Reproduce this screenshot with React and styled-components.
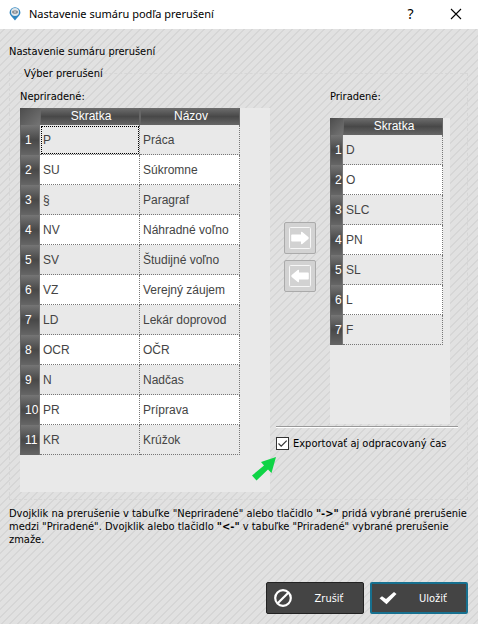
import React, { useState } from "react"
import styled, { createGlobalStyle, css } from "styled-components"

const unassigned = [
    ["P", "Práca"],
    ["SU", "Súkromne"],
    ["§", "Paragraf"],
    ["NV", "Náhradné voľno"],
    ["SV", "Študijné voľno"],
    ["VZ", "Verejný záujem"],
    ["LD", "Lekár doprovod"],
    ["OCR", "OČR"],
    ["N", "Nadčas"],
    ["PR", "Príprava"],
    ["KR", "Krúžok"],
]

const assigned = [["D"], ["O"], ["SLC"], ["PN"], ["SL"], ["L"], ["F"]]

const PinIcon = () => (
    <svg width="12" height="14" viewBox="0 0 12 14" aria-hidden="true">
        <path
            d="M6 13.6C4.6 11 .6 8.600 .6 5.400A5.400 5.200 0 0 1 11.400 5.400C11.400 8.600 7.400 11 6 13.600Z"
            fill="#2f86c0"
        />
        <circle cx="6" cy="5" r="4" fill="#dfe6ea" />
        <ellipse cx="6" cy="5" rx="3" ry="1.8" fill="#8a8f94" />
        <circle cx="6" cy="5" r="0.8" fill="#e8ecef" />
    </svg>
)

const CloseIcon = () => (
    <svg width="12" height="12" viewBox="0 0 12 12" aria-hidden="true">
        <path d="M1 1L11 11M11 1L1 11" stroke="#000" strokeWidth="1.1" />
    </svg>
)

const MoveIcon = ({ back }) => (
    <svg width="24" height="24" viewBox="0 0 24 24" aria-hidden="true">
        <rect
            x="1.500"
            y="1.500"
            width="21"
            height="21"
            rx="1"
            fill="#d2d2d2"
            stroke="#f6f6f6"
        />
        <path
            d="M4 8.500h9V6.500q0-1.300 1.300-.5l6 5q1 1 0 2l-6 5q-1.300.8-1.300-.5v-2H4q-.8 0-.8-.8v-5.400q0-.8.8-.8z"
            fill="#fff"
            transform={back ? "rotate(180 12 12)" : undefined}
        />
    </svg>
)

const CancelIcon = () => (
    <svg width="18" height="18" viewBox="0 0 18 18" aria-hidden="true">
        <circle cx="9" cy="9" r="7.800" fill="none" stroke="#fff" strokeWidth="2.200" />
        <path d="M14.300 3.700L3.700 14.300" stroke="#fff" strokeWidth="2.200" />
    </svg>
)

const SaveIcon = () => (
    <svg width="18" height="18" viewBox="0 0 18 18" aria-hidden="true">
        <path d="M.5 9.200L3 7.200l4 2.800L15 3l2.500 2L7.500 15.200z" fill="#fff" />
    </svg>
)

const PointerArrow = () => (
    <svg width="26" height="26" viewBox="0 0 26 26" aria-hidden="true">
        <path
            d="M25 1L20.500 17 17 13.500 5.500 24.500 1 19.500 13 9.500 10 6z"
            fill="#0fd446"
        />
    </svg>
)

const DataTable = ({ label, columns, rows, numberWidth, current }) => (
    <Table aria-label={label}>
        <colgroup>
            <Col $width={numberWidth} />
            {columns.map(c => (
                <Col key={c} $width={100} />
            ))}
        </colgroup>
        <thead>
            <tr>
                <Corner />
                {columns.map(c => (
                    <ColumnHead key={c} scope="col">
                        {c}
                    </ColumnHead>
                ))}
            </tr>
        </thead>
        <tbody>
            {rows.map((row, i) => (
                <Row key={row[0]}>
                    <RowHead scope="row">{i + 1}</RowHead>
                    {row.map((value, j) => (
                        <Cell key={j} $current={current && i === 0 && j === 0}>
                            {value}
                        </Cell>
                    ))}
                </Row>
            ))}
        </tbody>
    </Table>
)

export default function App() {
    const [exportWorked, setExportWorked] = useState(true)

    return (
        <>
            <GlobalStyle />
            <Dialog>
                <TitleBar>
                    <PinIcon />
                    <Title>Nastavenie sumáru podľa prerušení</Title>
                    <TitleButton aria-label="Pomocník">?</TitleButton>
                    <TitleButton aria-label="Zavrieť">
                        <CloseIcon />
                    </TitleButton>
                </TitleBar>
                <Content>
                    <Heading>Nastavenie sumáru prerušení</Heading>
                    <Group>
                        <Legend>Výber prerušení</Legend>
                        <Columns>
                            <LeftSide>
                                <Label>Nepriradené:</Label>
                                <TablePanel $height={384}>
                                    <DataTable
                                        label="Nepriradené"
                                        columns={["Skratka", "Názov"]}
                                        rows={unassigned}
                                        numberWidth={20}
                                        current
                                    />
                                </TablePanel>
                            </LeftSide>
                            <RightSide>
                                <Transfer>
                                    <MoveButtons>
                                        <MoveButton aria-label="Priradiť">
                                            <MoveIcon />
                                        </MoveButton>
                                        <MoveButton aria-label="Odobrať">
                                            <MoveIcon back />
                                        </MoveButton>
                                    </MoveButtons>
                                    <Assigned>
                                        <Label>Priradené:</Label>
                                        <TablePanel $height={306}>
                                            <DataTable
                                                label="Priradené"
                                                columns={["Skratka"]}
                                                rows={assigned}
                                                numberWidth={13}
                                            />
                                        </TablePanel>
                                    </Assigned>
                                </Transfer>
                                <Divider />
                                <CheckLabel>
                                    <Checkbox
                                        type="checkbox"
                                        checked={exportWorked}
                                        onChange={e => setExportWorked(e.target.checked)}
                                    />
                                    Exportovať aj odpracovaný čas
                                    <Pointer>
                                        <PointerArrow />
                                    </Pointer>
                                </CheckLabel>
                            </RightSide>
                        </Columns>
                    </Group>
                    <Hint>
                        Dvojklik na prerušenie v tabuľke "Nepriradené" alebo tlačidlo{" "}
                        <b>"-&gt;"</b> pridá vybrané prerušenie medzi "Priradené".
                        Dvojklik alebo tlačidlo <b>"&lt;-"</b> v tabuľke "Priradené"
                        vybrané prerušenie zmaže.
                    </Hint>
                    <Actions>
                        <ActionButton>
                            <CancelIcon />
                            <span>Zrušiť</span>
                        </ActionButton>
                        <ActionButton $primary>
                            <SaveIcon />
                            <span>Uložiť</span>
                        </ActionButton>
                    </Actions>
                </Content>
            </Dialog>
        </>
    )
}

const GlobalStyle = createGlobalStyle`
    *, *::before, *::after {
        box-sizing: border-box;
    }

    body {
        margin: 0;
        background: #dfdfdf;
    }

    button, input {
        font: inherit;
        margin: 0;
    }
`

const Dialog = styled.div`
    display: flex;
    flex-direction: column;
    min-height: 100vh;
    color: #000;
    font-family: "DejaVu Sans Condensed", "Noto Sans", sans-serif;
    font-size: 11px;
    line-height: 13px;
    background: linear-gradient(
        135deg,
        #d6d6d6 12.5%,
        #e1e1e1 12.5%,
        #e1e1e1 50%,
        #d6d6d6 50%,
        #d6d6d6 62.5%,
        #e1e1e1 62.5%
    );
    background-size: 8px 8px;
`

const TitleBar = styled.header`
    display: flex;
    align-items: center;
    height: 29px;
    padding: 0 0 2px 9px;
    background: #fff;
`

const Title = styled.h1`
    flex: 1;
    margin: 0 0 0 8px;
    font: 11px/16px "Noto Sans", sans-serif;
`

const TitleButton = styled.button`
    display: flex;
    align-items: center;
    justify-content: center;
    width: 45px;
    height: 27px;
    padding: 0;
    border: 0;
    background: none;
    font: 14px/16px "Noto Sans", sans-serif;
`

const Content = styled.main`
    flex: 1;
    display: flex;
    flex-direction: column;
    padding: 16px 10px 10px 9px;
`

const Heading = styled.h2`
    margin: 0;
    font-size: 11px;
    font-weight: normal;
`

const Group = styled.fieldset`
    min-width: 0;
    margin: 9px 0 0;
    padding: 10px 9px 7px 10px;
    border: 1px dashed #d6d6d6;
`

const Legend = styled.legend`
    margin-left: 4px;
    padding: 0;
`

const Columns = styled.div`
    display: flex;
    gap: 6px;
`

const LeftSide = styled.div`
    flex: 1;
`

const RightSide = styled.div`
    display: flex;
    flex-direction: column;
    width: 182px;
`

const Label = styled.div`
    height: 18px;
`

const TablePanel = styled.div`
    min-height: ${p => p.$height}px;
    background: #e9e9e9;
`

const Transfer = styled.div`
    display: flex;
    gap: 14px;
    padding: 0 8px;
`

const MoveButtons = styled.div`
    display: flex;
    flex-direction: column;
    justify-content: center;
    gap: 6px;
`

const MoveButton = styled.button`
    display: flex;
    align-items: center;
    justify-content: center;
    width: 32px;
    height: 32px;
    padding: 0;
    border: 1px solid #aaa;
    border-radius: 2px;
    background: #d2d2d2;
`

const Assigned = styled.div`
    flex: 1;

    ${Label} {
        height: 28px;
    }
`

const Table = styled.table`
    table-layout: fixed;
    width: 0;
    border-collapse: separate;
    border-spacing: 0;
    color: #444;
    font: 12px/16px "Liberation Sans", sans-serif;
`

const Col = styled.col`
    width: ${p => p.$width}px;
`

const Corner = styled.td`
    padding: 0;
    background: linear-gradient(135deg, #4c4c4c, #747474);
`

const ColumnHead = styled.th`
    height: 17px;
    padding: 0 0 0 2px;
    border: 1px solid #666;
    border-width: 0 1px;
    background: linear-gradient(#6e6e6e, #484848 50%, #666);
    color: #fff;
    font-weight: normal;
    line-height: 17px;
`

const RowHead = styled.th`
    padding: 0 0 0 4px;
    border-left: 1px solid #666;
    border-right: 1px solid #777;
    background: linear-gradient(#757575, #484848 50%, #666);
    color: #fff;
    font-weight: normal;
    text-align: left;
`

const Cell = styled.td`
    height: 30px;
    padding: 0 0 0 3px;
    border-right: 1px dotted #777;
    border-bottom: 1px dotted #777;
    white-space: nowrap;

    ${p =>
        p.$current &&
        css`
            outline: 1px dotted #000;
            outline-offset: -2px;
        `}
`

const Row = styled.tr`
    &:nth-child(even) {
        background: #fff;
    }
`

const Divider = styled.hr`
    width: 100%;
    margin: 2px 0 9px;
    border: 0;
    border-top: 1px solid #999;
    border-bottom: 1px solid #fff;
`

const CheckLabel = styled.label`
    position: relative;
    display: flex;
    align-items: center;
    gap: 4px;
    white-space: nowrap;
`

const Checkbox = styled.input`
    appearance: none;
    width: 13px;
    height: 13px;
    border: 1px solid #333;
    background: #fff;

    &:checked {
        background: #fff
            url("data:image/svg+xml,%3Csvg xmlns='http://www.w3.org/2000/svg' viewBox='0 0 11 11'%3E%3Cpath d='M1.500 5.500L4.200 8.200 9.700 2.700' fill='none' stroke='%23333' stroke-width='1.200'/%3E%3C/svg%3E");
    }
`

const Pointer = styled.span`
    position: absolute;
    top: 19px;
    left: -25px;
    pointer-events: none;
`

const Hint = styled.p`
    margin: 7px 0 0;
`

const Actions = styled.div`
    display: flex;
    justify-content: flex-end;
    gap: 6px;
    margin-top: auto;
`

const ActionButton = styled.button`
    display: flex;
    align-items: center;
    width: 98px;
    height: 32px;
    padding: 0 7px;
    border: ${p => (p.$primary ? "2px solid #17708f" : "1px solid #222")};
    border-radius: 2px;
    background: #444;
    color: #fff;

    span {
        flex: 1;
        padding-left: 10px;
    }
`
